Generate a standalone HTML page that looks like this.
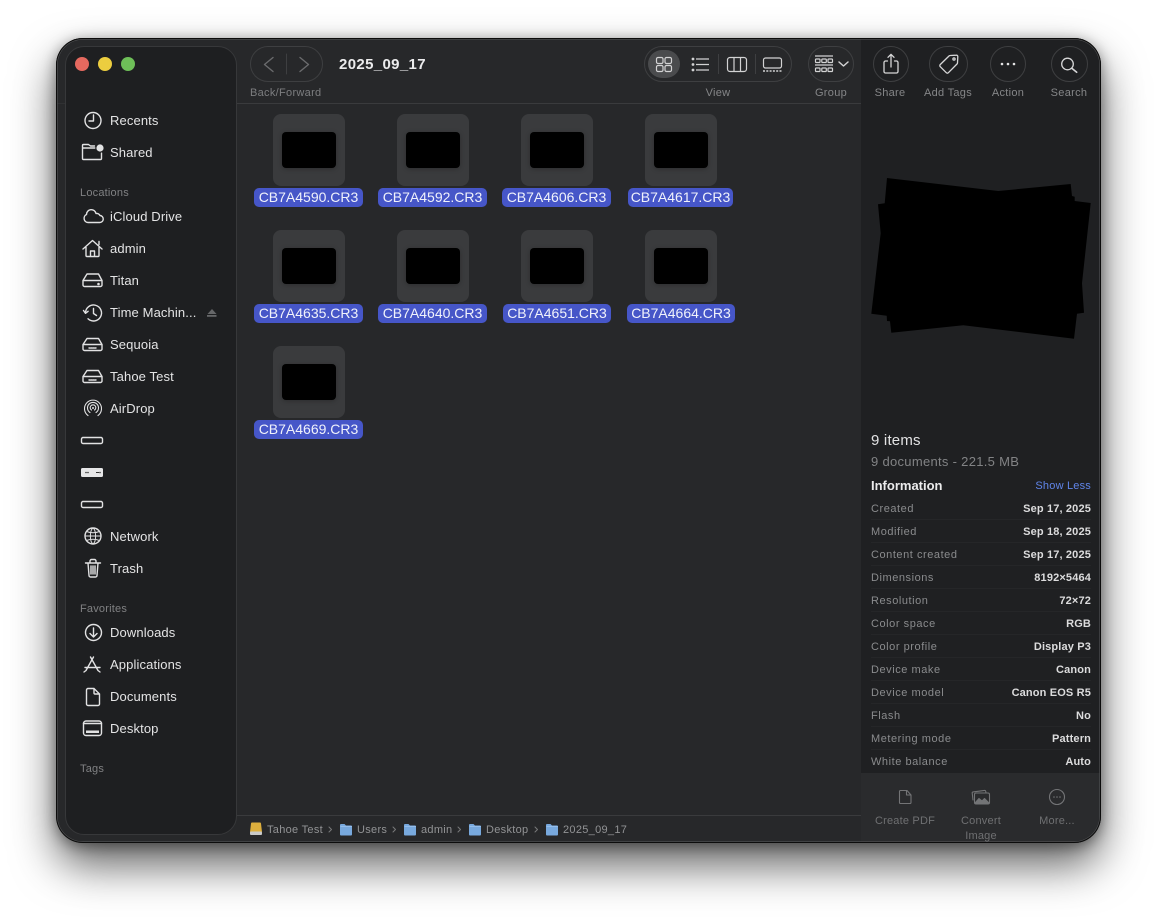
<!DOCTYPE html>
<html><head><meta charset="utf-8">
<style>
*{box-sizing:border-box}
html,body{margin:0;padding:0;width:1157px;height:917px;overflow:hidden;background:#fff;font-family:"Liberation Sans",sans-serif}
#win{position:absolute;left:56px;top:38px;width:1045px;height:805px;border-radius:27px;background:#27282a;box-shadow:0 22px 44px rgba(0,0,0,.62),0 3px 14px rgba(0,0,0,.4);overflow:hidden}
#bd{position:absolute;left:56px;top:38px;width:1045px;height:805px;border-radius:27px;box-shadow:0 0 0 1px #0c0c0c inset,0 0 0 1.6px #505153 inset}
.a{position:absolute;white-space:nowrap}
#insp{position:absolute;left:805px;top:0;width:240px;height:805px;background:#1f2022}
#qa{position:absolute;left:805px;top:735px;width:240px;height:70px;background:#2a2b2d}
#side{position:absolute;left:65px;top:46px;width:172px;height:789px;border-radius:19px;background:#1e1f21;border:1px solid #37383a}
.s{position:absolute;left:110px;font-size:13px;line-height:16px;color:#e4e4e5;white-space:nowrap;letter-spacing:.12px}
.h{position:absolute;left:80px;font-size:11px;line-height:14px;color:#808183;white-space:nowrap;letter-spacing:.2px}
.tile{position:absolute;width:72px;height:72px;border-radius:8px;background:#3a3b3d}
.tile i{position:absolute;left:9px;top:18px;width:54px;height:36px;border-radius:4px;background:#000;box-shadow:0 1px 5px rgba(0,0,0,.25)}
.lb{position:absolute;height:19px;line-height:19px;background:#4656c8;border-radius:5px;color:#f0f2fb;font-size:14px;text-align:center;white-space:nowrap}
.tl{position:absolute;font-size:11px;line-height:14px;color:#858688;white-space:nowrap;text-align:center;letter-spacing:.3px}
.pill{position:absolute;border:1px solid #3e3f41;border-radius:19px;height:36px;top:46px}
.r{position:absolute;left:871px;width:220px;height:23px;border-bottom:1px solid #252628;font-size:11px;line-height:14px;color:#8a8b8d}
.r span{position:absolute;left:0;top:5px;letter-spacing:.55px}
.r b{position:absolute;right:0;top:5px;color:#dcdcdd;letter-spacing:.15px}
.p{position:absolute;top:823px;font-size:11px;line-height:14px;color:#929395;white-space:nowrap;letter-spacing:.3px}
.q{position:absolute;font-size:11px;line-height:14px;color:#6f7072;text-align:center;white-space:nowrap;letter-spacing:.2px}
svg{position:absolute;left:0;top:0}
</style></head><body>
<div id="win">
<div id="insp"></div><div id="qa"></div>
<div class="a" style="left:180px;top:65px;width:625px;height:1px;background:#3a3b3d"></div>
<div class="a" style="left:0;top:65px;width:180px;height:1px;background:#303133"></div>
<div class="a" style="left:180px;top:777px;width:625px;height:1px;background:#3a3b3d"></div>
</div>
<div id="bd"></div>
<div id="side"></div>

<div class="pill" style="left:250px;width:73px"></div>
<div class="pill" style="left:644px;width:148px"></div>
<div class="a" style="left:648px;top:50px;width:32px;height:28px;border-radius:14px;background:#4a4b4d"></div>
<div class="pill" style="left:808px;width:46px"></div>
<div class="pill" style="left:873px;width:36px"></div>
<div class="pill" style="left:929px;width:39px"></div>
<div class="pill" style="left:990px;width:36px"></div>
<div class="pill" style="left:1051px;width:37px"></div>

<div class="a" style="left:339px;top:56px;font-size:15px;line-height:18px;font-weight:bold;color:#ececed;letter-spacing:.35px">2025_09_17</div>
<div class="tl" style="left:250px;top:86px;color:#7d7e80">Back/Forward</div>
<div class="tl" style="left:688px;top:86px;width:60px">View</div>
<div class="tl" style="left:801px;top:86px;width:60px">Group</div>
<div class="tl" style="left:860px;top:86px;width:60px">Share</div>
<div class="tl" style="left:913px;top:86px;width:70px">Add Tags</div>
<div class="tl" style="left:978px;top:86px;width:60px">Action</div>
<div class="tl" style="left:1039px;top:86px;width:60px">Search</div>

<div class="s" style="top:113px">Recents</div>
<div class="s" style="top:145px">Shared</div>
<div class="h" style="top:186px">Locations</div>
<div class="s" style="top:209px">iCloud Drive</div>
<div class="s" style="top:241px">admin</div>
<div class="s" style="top:273px">Titan</div>
<div class="s" style="top:305px">Time Machin...</div>
<div class="s" style="top:337px">Sequoia</div>
<div class="s" style="top:369px">Tahoe Test</div>
<div class="s" style="top:401px">AirDrop</div>
<div class="s" style="top:529px">Network</div>
<div class="s" style="top:561px">Trash</div>
<div class="h" style="top:602px">Favorites</div>
<div class="s" style="top:625px">Downloads</div>
<div class="s" style="top:657px">Applications</div>
<div class="s" style="top:689px">Documents</div>
<div class="s" style="top:721px">Desktop</div>
<div class="h" style="top:762px">Tags</div>

<div class="tile" style="left:273px;top:114px"><i></i></div>
<div class="tile" style="left:397px;top:114px"><i></i></div>
<div class="tile" style="left:521px;top:114px"><i></i></div>
<div class="tile" style="left:645px;top:114px"><i></i></div>
<div class="tile" style="left:273px;top:230px"><i></i></div>
<div class="tile" style="left:397px;top:230px"><i></i></div>
<div class="tile" style="left:521px;top:230px"><i></i></div>
<div class="tile" style="left:645px;top:230px"><i></i></div>
<div class="tile" style="left:273px;top:346px"><i></i></div>
<div class="lb" style="left:254px;top:188px;width:109px">CB7A4590.CR3</div>
<div class="lb" style="left:378px;top:188px;width:109px">CB7A4592.CR3</div>
<div class="lb" style="left:502px;top:188px;width:109px">CB7A4606.CR3</div>
<div class="lb" style="left:628px;top:188px;width:105px">CB7A4617.CR3</div>
<div class="lb" style="left:254px;top:304px;width:109px">CB7A4635.CR3</div>
<div class="lb" style="left:378px;top:304px;width:109px">CB7A4640.CR3</div>
<div class="lb" style="left:503px;top:304px;width:108px">CB7A4651.CR3</div>
<div class="lb" style="left:627px;top:304px;width:108px">CB7A4664.CR3</div>
<div class="lb" style="left:254px;top:420px;width:109px">CB7A4669.CR3</div>

<div class="a" style="left:871px;top:432px;font-size:15px;line-height:18px;color:#e2e2e3;letter-spacing:.2px">9 items</div>
<div class="a" style="left:871px;top:454px;font-size:13px;line-height:16px;color:#828385;letter-spacing:.3px">9 documents - 221.5 MB</div>
<div class="a" style="left:871px;top:478px;font-size:13px;line-height:16px;font-weight:bold;color:#ececed">Information</div>
<div class="a" style="right:66px;top:479px;font-size:11px;line-height:14px;color:#6085ea;letter-spacing:.2px">Show Less</div>
<div class="r" style="top:497px"><span>Created</span><b>Sep 17, 2025</b></div>
<div class="r" style="top:520px"><span>Modified</span><b>Sep 18, 2025</b></div>
<div class="r" style="top:543px"><span>Content created</span><b>Sep 17, 2025</b></div>
<div class="r" style="top:566px"><span>Dimensions</span><b>8192×5464</b></div>
<div class="r" style="top:589px"><span>Resolution</span><b>72×72</b></div>
<div class="r" style="top:612px"><span>Color space</span><b>RGB</b></div>
<div class="r" style="top:635px"><span>Color profile</span><b>Display P3</b></div>
<div class="r" style="top:658px"><span>Device make</span><b>Canon</b></div>
<div class="r" style="top:681px"><span>Device model</span><b>Canon EOS R5</b></div>
<div class="r" style="top:704px"><span>Flash</span><b>No</b></div>
<div class="r" style="top:727px"><span>Metering mode</span><b>Pattern</b></div>
<div class="r" style="top:750px;border:0"><span>White balance</span><b>Auto</b></div>

<div class="q" style="left:865px;top:814px;width:80px">Create PDF</div>
<div class="q" style="left:941px;top:814px;width:80px;line-height:14.5px">Convert<br>Image</div>
<div class="q" style="left:1017px;top:814px;width:80px">More...</div>

<div class="p" style="left:267px">Tahoe Test</div>
<div class="p" style="left:357px">Users</div>
<div class="p" style="left:421px">admin</div>
<div class="p" style="left:486px">Desktop</div>
<div class="p" style="left:563px">2025_09_17</div>

<svg width="1157" height="917" viewBox="0 0 1157 917" fill="none">
<circle cx="82" cy="64" r="7" fill="#e5695f"/><circle cx="105" cy="64" r="7" fill="#eccd3f"/><circle cx="128" cy="64" r="7" fill="#6ebf58"/>

<g stroke="#6a6b6d" stroke-width="1.4" stroke-linecap="round" stroke-linejoin="round">
<path d="M273 57.500l-8.500 7 8.500 7M300 57.500l8.500 7-8.500 7"/>
<path d="M286.500 54v20" stroke="#3e3f41" stroke-width="1"/>
</g>

<g stroke="#d2d2d3" stroke-width="1.2" stroke-linejoin="round">
<rect x="656.500" y="57.500" width="6.500" height="6" rx="1.500"/><rect x="665" y="57.500" width="6.500" height="6" rx="1.500"/>
<rect x="656.500" y="65.500" width="6.500" height="6" rx="1.500"/><rect x="665" y="65.500" width="6.500" height="6" rx="1.500"/>
<path d="M696 59h13M696 64.500h13M696 70h13"/>
<circle cx="693" cy="59" r=".8" fill="#d2d2d3"/><circle cx="693" cy="64.500" r=".8" fill="#d2d2d3"/><circle cx="693" cy="70" r=".8" fill="#d2d2d3"/>
<rect x="727.500" y="57.500" width="19" height="14" rx="2.500"/><path d="M734 57.500v14M740.500 57.500v14"/>
<rect x="763.500" y="58" width="18" height="10" rx="2"/><path d="M763 71h19" stroke-dasharray="2 1.300" stroke-width="1.500"/>
<path d="M718.500 54v20M755.500 54v20" stroke="#3e3f41" stroke-width="1"/>
<path d="M815 56h18M815 65h18"/>
<rect x="815.500" y="59" width="4.500" height="3.500" rx=".8"/><rect x="821.800" y="59" width="4.500" height="3.500" rx=".8"/><rect x="828" y="59" width="4.500" height="3.500" rx=".8"/>
<rect x="815.500" y="68" width="4.500" height="3.500" rx=".8"/><rect x="821.800" y="68" width="4.500" height="3.500" rx=".8"/><rect x="828" y="68" width="4.500" height="3.500" rx=".8"/>
<path d="M839 62l4.500 4 4.500-4" stroke-width="1.500" stroke-linecap="round"/>
</g>

<g stroke="#d6d6d7" stroke-width="1.3" stroke-linecap="round" stroke-linejoin="round">
<path d="M887.500 61h-2a1.500 1.500 0 0 0-1.500 1.500v9a1.500 1.500 0 0 0 1.500 1.500h11a1.500 1.500 0 0 0 1.500-1.500v-9a1.500 1.500 0 0 0-1.500-1.500h-2M891 67v-12.500M888 57.300l3-3 3 3"/>
<path d="M940.300 64.500l8.700-8.500a1.500 1.500 0 0 1 1.100-.5l6.300-.3a1.300 1.300 0 0 1 1.400 1.400l-.3 6.300a1.500 1.500 0 0 1-.5 1.100l-8.600 8.700a1.500 1.500 0 0 1-2.100 0l-5.900-5.900a1.500 1.500 0 0 1-.1-2.300z"/>
<circle cx="954" cy="59" r="1.100"/>
<circle cx="1067.500" cy="64" r="5.800"/><path d="M1071.800 68.300l4.900 4" stroke-width="1.600"/>
</g>
<circle cx="1002" cy="64" r="1.300" fill="#e4e4e5"/><circle cx="1008" cy="64" r="1.300" fill="#e4e4e5"/><circle cx="1014" cy="64" r="1.300" fill="#e4e4e5"/>

<g stroke="#e2e2e3" stroke-width="1.400" stroke-linecap="round" stroke-linejoin="round">
<circle cx="93" cy="120.500" r="8"/><path d="M93.500 115v6h-4.500"/>
<path d="M97 148h-14.500v10.500a1 1 0 0 0 1 1h17a1 1 0 0 0 1-1v-5.500M82.500 148v-2.500a1 1 0 0 1 1-1h5l2 1.500h4"/>
<circle cx="100" cy="148" r="4.800" fill="#1e1f21" stroke="none"/>
<circle cx="100" cy="148" r="3.600" fill="#e2e2e3" stroke="none"/>
<path d="M88 222.500h11.500a3.500 3.500 0 0 0 .5-7 4 4 0 0 0-4-2a4.800 4.800 0 0 0-9.500 1a4.200 4.200 0 0 0 1.500 8z"/>
<path d="M83 249l9.500-8.500 9.500 8.500M86 247v8.500a1 1 0 0 0 1 1h11a1 1 0 0 0 1-1v-8.500M90.500 256.500v-5.500h4v5.500M99 241.500v3"/>
<path d="M87 274h11.500l3.500 6.500v4.500a1.500 1.500 0 0 1-1.500 1.500h-16a1.500 1.500 0 0 1-1.500-1.500v-4.500zM83 280.500h19"/>
<circle cx="98.500" cy="284" r=".6" fill="#e2e2e3"/>
<path d="M85.500 313a8 8 0 1 1 2.500 5.800M83.500 310.500l2 2.800 2.600-2M93.500 308.500v5l3 2"/>
<path d="M87 338.500h11.500l3.500 6v4.500a1.500 1.500 0 0 1-1.500 1.500h-16a1.500 1.500 0 0 1-1.500-1.500v-4.500zM83 344.500h19"/>
<path d="M89 348h8" stroke-dasharray="1 1"/>
<path d="M87 370.500h11.500l3.500 6v4.500a1.500 1.500 0 0 1-1.500 1.500h-16a1.500 1.500 0 0 1-1.500-1.500v-4.500zM83 376.500h19"/>
<path d="M89 380h8" stroke-dasharray="1 1"/>
<path d="M88 415.500a8.500 8.500 0 1 1 10 0M90 412.500a5.500 5.500 0 1 1 6 0M91.500 410a2.800 2.800 0 1 1 3 0" stroke-width="1.100"/>
<circle cx="93" cy="408" r="1" fill="#e2e2e3" stroke="none"/><rect x="81.500" y="437.500" width="21" height="6" rx="1.500"/>
<rect x="81.500" y="501.500" width="21" height="6" rx="1.500"/>
<circle cx="93" cy="536" r="8"/><path d="M85 536h16M93 528c-3.500 2.500-3.500 13.500 0 16M93 528c3.500 2.500 3.500 13.500 0 16M86.500 531.500c4 1.500 9 1.500 13 0M86.500 540.500c4-1.500 9-1.500 13 0" stroke-width="1"/>
<path d="M85.500 563h15M88 563l1 12.500a1.500 1.500 0 0 0 1.500 1.500h5a1.500 1.500 0 0 0 1.500-1.500l1-12.500M90 563v-2a1.500 1.500 0 0 1 1.500-1.500h3a1.500 1.500 0 0 1 1.500 1.500v2M91 566v8M93 566v8M95 566v8"/>
<circle cx="93.500" cy="632.500" r="8"/><path d="M93.500 628v8.500M90 633.500l3.500 3.500 3.500-3.500"/>
<path d="M86 670.500l7.500-13.500M90.500 657l7.500 13.500M85 667.500h15M84 672l2-1.500M100 672l-2-1.500"/>
<path d="M88 688.500h6l5.500 5.500v10a1.500 1.500 0 0 1-1.500 1.500h-10a1.500 1.500 0 0 1-1.500-1.500v-14a1.500 1.500 0 0 1 1.500-1.500zM94 688.500v4.500a1 1 0 0 0 1 1h4.500"/>
<rect x="83.500" y="721" width="18" height="14.500" rx="2.500"/><path d="M83.500 723.500h18"/>
</g>
<rect x="86" y="730.500" width="13" height="2.500" fill="#e2e2e3"/>
<rect x="81" y="468" width="22" height="9" rx="1.500" fill="#e6e6e7"/>
<circle cx="86" cy="472.500" r=".8" fill="#333"/><circle cx="88" cy="472.500" r=".8" fill="#333"/><rect x="96" y="472" width="3" height="1" fill="#333"/><circle cx="100" cy="472.500" r=".8" fill="#333"/>
<path d="M212 309l4.500 5h-9z" fill="#666769"/><rect x="207" y="315" width="9.500" height="1.800" fill="#666769"/>

<polygon fill="#000" points="887,178 998.300,191 1070.700,184 1072,196 1074.700,196.700 1074.700,201 1090.700,203 1082,283.300 1084,312.700 1077,313.700 1074,338.700 963.300,325.300 891.300,332.700 890,321.300 887,321 886.700,315.700 871.300,313.700 880.700,233.300 878,204.300 884.700,203.300"/>

<g stroke="#737476" stroke-width="1.100" stroke-linejoin="round" stroke-linecap="round">
<path d="M900.500 790.500h6.500l4 4.500v7.500a1 1 0 0 1-1 1h-9.500a1 1 0 0 1-1-1v-11a1 1 0 0 1 1-1zM906.500 790.500v4.500h4.500"/>
<rect x="974.500" y="793" width="15" height="11" rx="1.500"/><path d="M973 800l-.8-7a1 1 0 0 1 .9-1.100l11.500-1.500a1 1 0 0 1 1.100.8l.3 1.800"/>
<path d="M975 803l4-4.500 3 2.500 2.500-2.500 4.500 4.500z" fill="#737476"/>
<circle cx="1057" cy="797" r="7.500"/>
</g>
<circle cx="1054" cy="797" r=".8" fill="#737476"/><circle cx="1057" cy="797" r=".8" fill="#737476"/><circle cx="1060" cy="797" r=".8" fill="#737476"/>

<path d="M251 823.500a1 1 0 0 1 1-1h8a1 1 0 0 1 1 1l1 8.500h-12z" fill="#dcae3d"/><rect x="250" y="831.500" width="12" height="3.500" rx="1" fill="#c9c9c9"/>
<g fill="#78a9de">
<path d="M340 825a1 1 0 0 1 1-1h3.500l1.500 1.500h5a1 1 0 0 1 1 1v8a1 1 0 0 1-1 1h-10a1 1 0 0 1-1-1z"/>
<path d="M404 825a1 1 0 0 1 1-1h3.500l1.500 1.500h5a1 1 0 0 1 1 1v8a1 1 0 0 1-1 1h-10a1 1 0 0 1-1-1z"/>
<path d="M469 825a1 1 0 0 1 1-1h3.500l1.500 1.500h5a1 1 0 0 1 1 1v8a1 1 0 0 1-1 1h-10a1 1 0 0 1-1-1z"/>
<path d="M546 825a1 1 0 0 1 1-1h3.500l1.500 1.500h5a1 1 0 0 1 1 1v8a1 1 0 0 1-1 1h-10a1 1 0 0 1-1-1z"/>
</g>
<g stroke="#a9cdf2" stroke-width=".8" opacity=".8"><path d="M340.500 826.500h11.500M404.500 826.500h11.500M469.500 826.500h11.500M546.500 826.500h11.500"/></g>
<g stroke="#77787a" stroke-width="1" stroke-linecap="round" stroke-linejoin="round">
<path d="M329 827l2.500 2.500-2.500 2.500M393 827l2.500 2.500-2.500 2.500M458 827l2.500 2.500-2.500 2.500M535 827l2.500 2.500-2.500 2.500"/>
</g>
</svg>
</body></html>
